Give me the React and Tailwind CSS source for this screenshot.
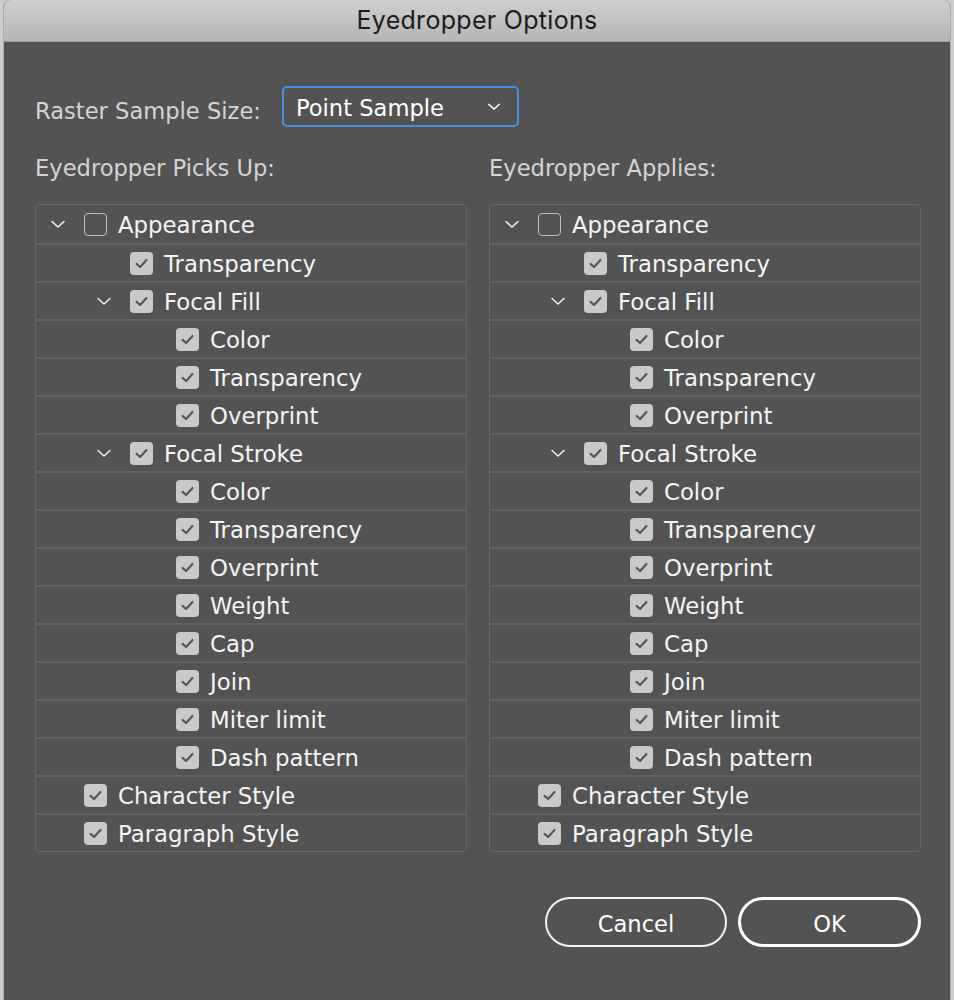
const TREE = [
  { label: 'Appearance', level: 0, chevron: true, checked: false },
  { label: 'Transparency', level: 1 },
  { label: 'Focal Fill', level: 1, chevron: true },
  { label: 'Color', level: 2 },
  { label: 'Transparency', level: 2 },
  { label: 'Overprint', level: 2 },
  { label: 'Focal Stroke', level: 1, chevron: true },
  { label: 'Color', level: 2 },
  { label: 'Transparency', level: 2 },
  { label: 'Overprint', level: 2 },
  { label: 'Weight', level: 2 },
  { label: 'Cap', level: 2 },
  { label: 'Join', level: 2 },
  { label: 'Miter limit', level: 2 },
  { label: 'Dash pattern', level: 2 },
  { label: 'Character Style', level: 0 },
  { label: 'Paragraph Style', level: 0 },
]

const INDENT = ['w-0', 'w-[46px]', 'w-[92px]']

function Chevron({ className = '' }) {
  return (
    <svg viewBox="0 0 16 10" className={className} fill="none" stroke="currentColor" strokeWidth="1.6" strokeLinecap="round" strokeLinejoin="round">
      <path d="M2 2.5 L8 8 L14 2.5" />
    </svg>
  )
}

function Checkbox({ checked }) {
  if (!checked) {
    return <span className="w-[23px] h-[23px] rounded-[4px] border-[1.5px] border-[#bdbdbd] flex-shrink-0" />
  }
  return (
    <span className="w-[23px] h-[23px] rounded-[4px] bg-[#c9c9c9] flex items-center justify-center flex-shrink-0">
      <svg viewBox="0 0 24 24" className="w-[17px] h-[17px]" fill="none" stroke="#565656" strokeWidth="3" strokeLinecap="round" strokeLinejoin="round">
        <path d="M5 12.5 L10 17 L19 7" />
      </svg>
    </span>
  )
}

function TreeBox() {
  return (
    <div className="rounded-[4px] border border-[#666666] overflow-hidden">
      {TREE.map((row, i) => (
        <div
          key={i}
          className={`h-[38px] flex items-center ${i > 0 ? 'border-t-2 border-[#616161]' : ''}`}
        >
          <span className={`${INDENT[row.level]} flex-shrink-0`} />
          <span className="w-[48px] flex-shrink-0 flex items-center">
            {row.chevron && <Chevron className="ml-[14px] w-[16px] h-[10px] text-[#f0f0f0]" />}
          </span>
          <Checkbox checked={row.checked !== false} />
          <span className="ml-[11px] text-[22.8px] leading-none text-[#f4f4f4] whitespace-nowrap translate-y-[1px]">{row.label}</span>
        </div>
      ))}
    </div>
  )
}

export default function App() {
  return (
    <div
      className="relative w-[954px] h-[1000px] overflow-hidden bg-[#cdcdcd]"
      style={{ fontFamily: '"DejaVu Sans", "Liberation Sans", sans-serif' }}
    >
      <div className="absolute left-[3px] top-0 w-[948px] h-[1010px] rounded-t-[7px] overflow-hidden border-l border-r border-[#a9a9a9] bg-[#535353] flex flex-col">
        <div className="h-[42px] flex-shrink-0 flex items-center justify-center bg-gradient-to-b from-[#cfcfcf] to-[#b5b5b5] border-b border-[#9c9c9c]">
          <span className="text-[25px] text-[#1b1b1b] tracking-[0.3px]" style={{ fontFamily: 'Inter, "Liberation Sans", sans-serif' }}>
            Eyedropper Options
          </span>
        </div>

        <div className="pl-[31px] pr-[29px] pt-[44px]">
          <div className="flex items-center h-[40px]">
            <span className="text-[22.6px] text-[#d4d4d4] leading-none translate-y-[5px]">Raster Sample Size:</span>
            <div className="ml-[21px] w-[237px] h-[41px] rounded-[5px] border-2 border-[#4a8fdb] flex items-center justify-between pl-[12px] pr-[16px]">
              <span className="text-[22.6px] text-white leading-none translate-y-[2px]">Point Sample</span>
              <Chevron className="w-[14px] h-[9px] text-white" />
            </div>
          </div>

          <div className="grid grid-cols-2 gap-x-[22px] mt-[27px]">
            <div>
              <div className="h-[26px] flex items-center text-[22.6px] text-[#d4d4d4] leading-none translate-y-[2px]">Eyedropper Picks Up:</div>
              <div className="mt-[25px]">
                <TreeBox />
              </div>
            </div>
            <div>
              <div className="h-[26px] flex items-center text-[22.6px] text-[#d4d4d4] leading-none translate-y-[2px]">Eyedropper Applies:</div>
              <div className="mt-[25px]">
                <TreeBox />
              </div>
            </div>
          </div>

          <div className="flex justify-end gap-[11px] mt-[45px]">
            <button className="w-[182px] h-[50px] rounded-full border-2 border-[#f2f2f2] text-[22.6px] text-white leading-none">
              <span className="inline-block translate-y-[2px]">Cancel</span>
            </button>
            <button className="w-[183px] h-[50px] rounded-full border-[3px] border-white text-[22.6px] text-white leading-none">
              <span className="inline-block translate-y-[2px]">OK</span>
            </button>
          </div>
        </div>
      </div>
    </div>
  )
}
